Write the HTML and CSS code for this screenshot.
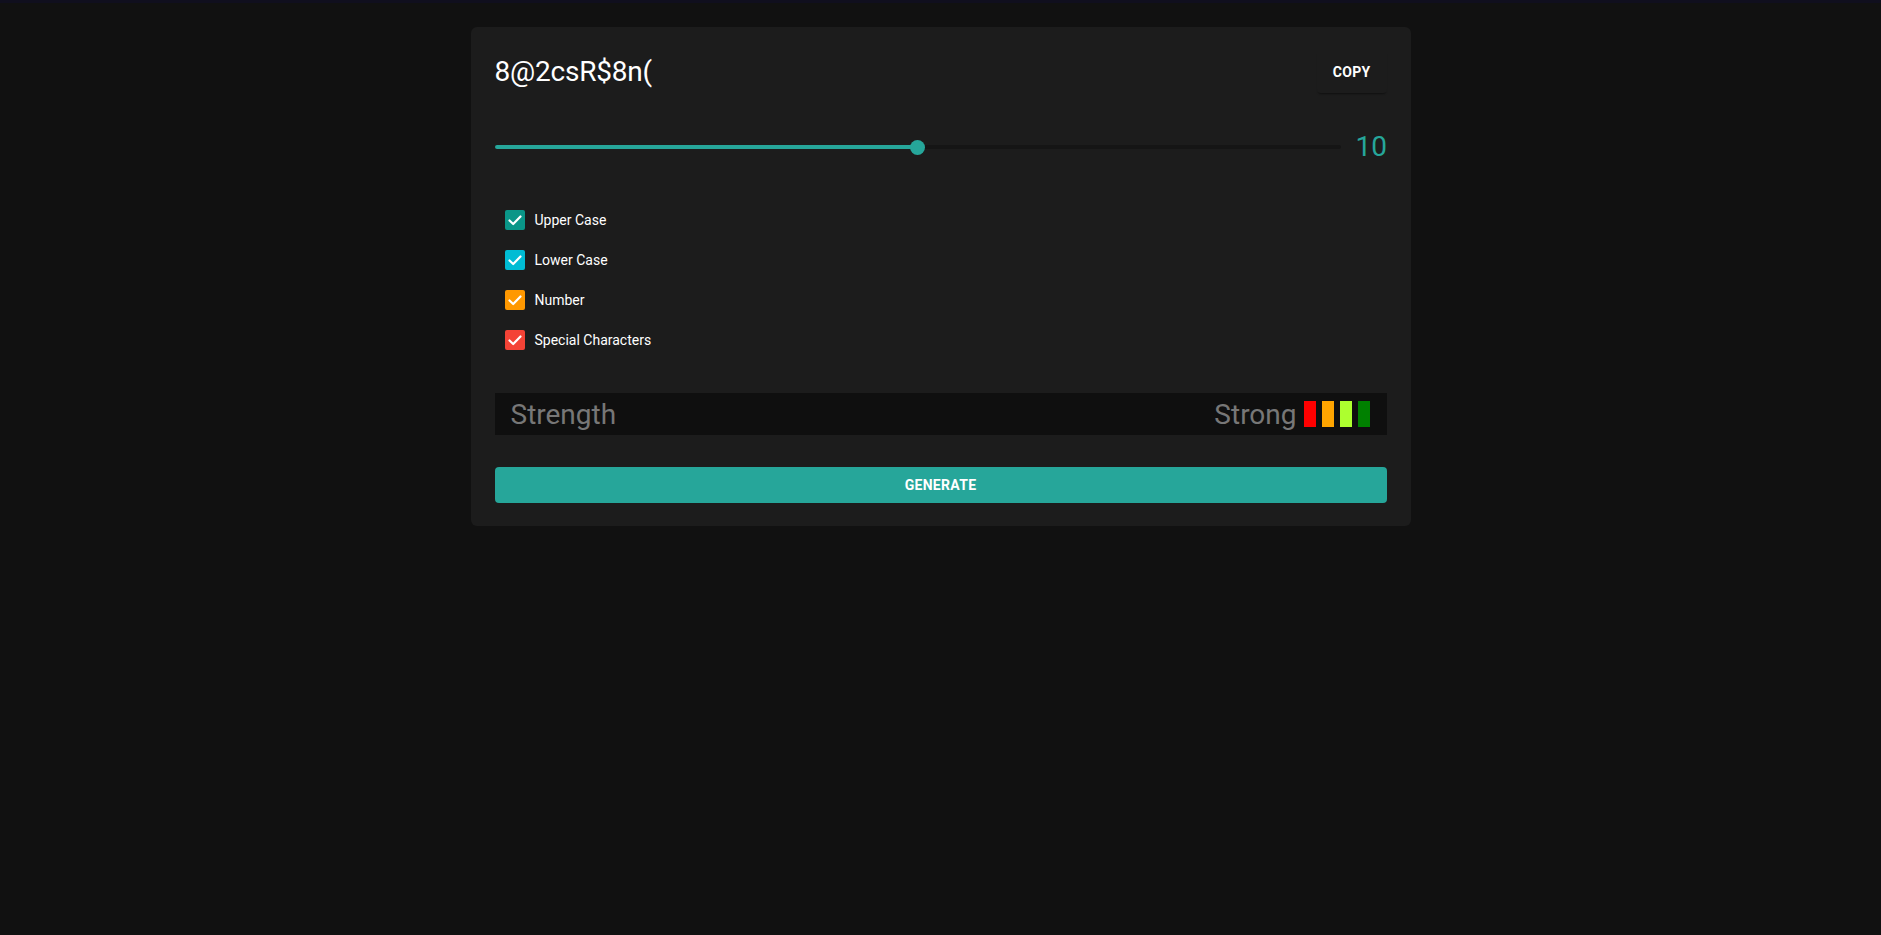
FILE: index.html
```html
<!DOCTYPE html>
<html lang="en">
<head>
<meta charset="utf-8">
<title>Password Generator</title>
<link rel="stylesheet" href="styles.css">
</head>
<body>
<div class="topband"></div>
<main class="card">
  <div class="header">
    <div class="password">8@2csR$8n(</div>
    <button class="copy-btn">COPY</button>
  </div>
  <div class="slider-row">
    <div class="slider">
      <div class="rail"></div>
      <div class="track" style="width:50%"></div>
      <div class="thumb" style="left:50%"></div>
    </div>
    <div class="length">10</div>
  </div>
  <ul class="options">
    <li class="option">
      <span class="box teal"><svg viewBox="0 0 20 20"><path d="M4.5 10.5 L8.2 14 L15.5 6.5"/></svg></span>
      <span class="label">Upper Case</span>
    </li>
    <li class="option">
      <span class="box cyan"><svg viewBox="0 0 20 20"><path d="M4.5 10.5 L8.2 14 L15.5 6.5"/></svg></span>
      <span class="label">Lower Case</span>
    </li>
    <li class="option">
      <span class="box orange"><svg viewBox="0 0 20 20"><path d="M4.5 10.5 L8.2 14 L15.5 6.5"/></svg></span>
      <span class="label">Number</span>
    </li>
    <li class="option">
      <span class="box red"><svg viewBox="0 0 20 20"><path d="M4.5 10.5 L8.2 14 L15.5 6.5"/></svg></span>
      <span class="label">Special Characters</span>
    </li>
  </ul>
  <div class="strength">
    <span class="strength-title">Strength</span>
    <div class="strength-value">
      <span class="strength-text">Strong</span>
      <span class="bar b1"></span>
      <span class="bar b2"></span>
      <span class="bar b3"></span>
      <span class="bar b4"></span>
    </div>
  </div>
  <button class="generate-btn">GENERATE</button>
</main>
</body>
</html>
```

FILE: styles.css
```css
* { box-sizing: border-box; }
html, body {
  margin: 0;
  padding: 0;
  background: #111111;
  font-family: Roboto, "Liberation Sans", Arial, sans-serif;
  color: #ffffff;
  min-height: 100%;
}
body { height: 935px; }
.topband {
  height: 3px;
  background: #100f1e;
}
.card {
  width: 940px;
  margin: 24px auto 0;
  background: #1c1c1c;
  border-radius: 6px;
  padding: 24px 24px 23px;
}
.header {
  height: 42px;
  display: flex;
  align-items: stretch;
  justify-content: space-between;
}
.password {
  font-size: 28px;
  line-height: 42px;
  color: #ffffff;
  letter-spacing: -0.2px;
}
.copy-btn {
  height: 42px;
  padding: 0 16px 1px;
  min-width: 68px;
  background: transparent;
  border: none;
  border-radius: 4px;
  color: #ffffff;
  font-family: inherit;
  font-size: 14px;
  font-weight: 700;
  letter-spacing: 0.3px;
  box-shadow: 0 2px 2px -1px rgba(0,0,0,0.45);
}
.slider-row {
  margin-top: 39px;
  height: 30px;
  display: flex;
  align-items: center;
  gap: 15px;
}
.slider {
  position: relative;
  flex: 1;
  height: 16px;
}
.rail {
  position: absolute;
  left: 0; right: 0;
  top: 6px;
  height: 4px;
  background: #151515;
  border-radius: 2px;
}
.track {
  position: absolute;
  left: 0;
  top: 6px;
  height: 4px;
  background: #26a69a;
  border-radius: 2px;
}
.thumb {
  position: absolute;
  top: 0.5px;
  width: 15px;
  height: 15px;
  margin-left: -7.5px;
  border-radius: 50%;
  background: #26a69a;
}
.length {
  font-size: 28px;
  line-height: 30px;
  color: #26a69a;
  width: 31px;
  text-align: right;
}
.options {
  list-style: none;
  margin: 38px 0 0;
  padding: 0;
}
.option {
  height: 40px;
  display: flex;
  align-items: center;
  padding-left: 10px;
  gap: 10px;
}
.box {
  width: 20px;
  height: 20px;
  border-radius: 2px;
  display: inline-flex;
}
.box svg {
  width: 20px;
  height: 20px;
}
.box path {
  fill: none;
  stroke: #ffffff;
  stroke-width: 2.2;
  stroke-linecap: round;
  stroke-linejoin: round;
}
.teal { background: #0a9688; }
.cyan { background: #00bcd4; }
.orange { background: #ff9800; }
.red { background: #f44336; }
.label {
  font-size: 14px;
  color: #ffffff;
}
.strength {
  margin-top: 33px;
  height: 42px;
  background: #0f0f0f;
  display: flex;
  align-items: center;
  justify-content: space-between;
  padding: 0 17px 0 16px;
}
.strength-title, .strength-text {
  font-size: 28px;
  color: #777777;
}
.strength-value {
  display: flex;
  align-items: center;
}
.strength-text { margin-right: 7px; }
.bar {
  width: 12px;
  height: 26px;
  margin-right: 6px;
}
.bar:last-child { margin-right: 0; }
.b1 { background: #ff0000; }
.b2 { background: #ffa500; }
.b3 { background: #adff2f; }
.b4 { background: #008000; }
.generate-btn {
  display: block;
  width: 100%;
  margin-top: 32px;
  height: 36px;
  border: none;
  border-radius: 4px;
  background: #26a69a;
  color: #ffffff;
  font-family: inherit;
  font-size: 14px;
  font-weight: 700;
  letter-spacing: 0.3px;
}
```
